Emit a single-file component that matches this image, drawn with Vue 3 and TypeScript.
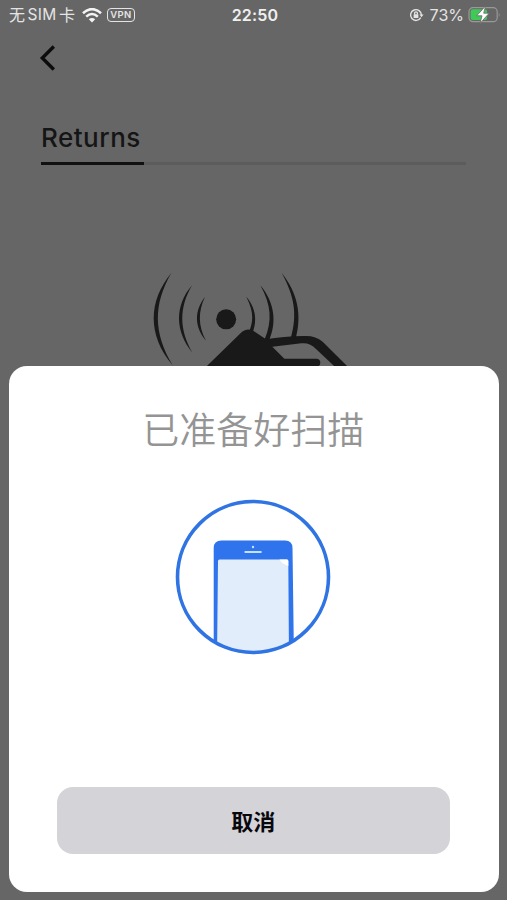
<script setup lang="ts">
import { ref } from 'vue'

const time = ref('22:50')
const battery = ref(73)
const scanning = ref(true)

function cancel(): void {
  scanning.value = false
}
</script>

<template>
  <main class="phone">
    <header class="status">
      <div class="status-left">
        <span class="carrier"><span>无</span><span class="sim">SIM</span><span>卡</span></span>
        <svg class="wifi" viewBox="0 0 20 15" aria-hidden="true">
          <path d="M1 5.3Q10-3 19 5.3" />
          <path d="M4.2 8.6Q10 3.4 15.8 8.6" />
          <path class="wifi-dot" d="M6.8 11.3Q10 8.6 13.2 11.3L10 14.6Z" />
        </svg>
        <span class="vpn">VPN</span>
      </div>
      <span class="clock">{{ time }}</span>
      <div class="status-right">
        <svg class="lock" viewBox="0 0 15 14" aria-hidden="true">
          <path class="ring" d="M11.7 9.7A5.4 5.4 0 1 1 12.4 7" />
          <path d="M10.500 6.500H14.600L12.500 9.200Z" />
          <rect x="4.600" y="6.200" width="4.800" height="3.800" rx=".6" />
          <path class="shackle" d="M5.600 6.500V5.300a1.400 1.400 0 0 1 2.800 0v1.200" />
        </svg>
        <span class="percent">{{ battery }}%</span>
        <svg class="battery" viewBox="0 0 34 20" aria-hidden="true">
          <rect class="case" x="2" y="2.700" width="28.200" height="14" rx="4" />
          <path class="nub" d="M31.800 7.400q1.600 2.400 0 4.800z" />
          <rect class="charge" x="3.600" y="4.300" width="16.500" height="10.800" rx="2.400" />
          <path class="bolt" d="M18.600 1L9.600 10.800h5.400L13 18.400L22.200 8.200h-5.500Z" />
        </svg>
      </div>
    </header>

    <nav class="back">
      <svg viewBox="0 0 18 28" aria-hidden="true"><path d="M14.800 2.500L3.300 14L14.800 25.500" /></svg>
    </nav>

    <div class="tabs"><span class="tab">Returns</span></div>

    <svg class="nfc" viewBox="0 0 660 375" aria-hidden="true">
      <path d="M94 39C25 122 21 225 98 316C40 220 39 133 94 39Z" />
      <path d="M156 76C103 137 105 215 157 278C117 207 117 144 156 76Z" />
      <path d="M195 110C162 153 163 200 198 242C174 197 174 155 195 110Z" />
      <path d="M319 110C345 141 353 177 338 218L328 214C342 176 339 151 319 110Z" />
      <path d="M361 76C404 128 411 186 387 242L374 238C397 182 394 136 361 76Z" />
      <path d="M425 39C474 100 486 166 467 236L453 232C472 163 464 110 425 39Z" />
      <circle cx="258.500" cy="178" r="30" />
      <path d="M200 319L300 221Q325 197 351 220L378 238Q430 229 492 228Q526 226 548 245L622 319H583L528 267Q510 247 484 250L397 260L433 296H531Q541 298 541 308Q541 316 535 319V345H200Z" />
    </svg>

    <section v-if="scanning" class="sheet">
      <h1 class="title">已准备好扫描</h1>
      <svg class="device" viewBox="0 0 156 156" aria-hidden="true">
        <defs>
          <clipPath id="device-clip"><circle cx="78" cy="78" r="76" /></clipPath>
        </defs>
        <g clip-path="url(#device-clip)">
          <path class="blue" d="M38.700 160V49Q38.700 41.500 46.500 41.500H110Q117.500 41.500 117.500 49L119 160Z" />
          <path class="screen" d="M43 62Q43 60.500 44.500 60.500H112Q113.300 60.500 113.300 62L114 160H42Z" />
          <path class="glare" d="M104.500 60.500H112Q113.300 60.500 113.300 62V67Q107 65 104.500 60.500Z" />
          <rect class="speaker" x="69.300" y="52" width="17.500" height="2" rx="1" />
          <circle class="speaker" cx="78" cy="48" r="1.200" />
        </g>
        <circle class="outline" cx="78" cy="78" r="75.500" />
      </svg>
      <button class="cancel" type="button" @click="cancel">取消</button>
    </section>
  </main>
</template>

<style>
body {
  margin: 0;
  background: #666;
}
</style>

<style scoped>
.phone {
  position: relative;
  display: flex;
  flex-direction: column;
  width: 507px;
  height: 900px;
  overflow: hidden;
  background: #666;
  font-family: Inter, "Noto Sans CJK SC", sans-serif;
}

svg {
  display: block;
}

.status {
  display: grid;
  grid-template-columns: 1fr auto 1fr;
  align-items: center;
  box-sizing: border-box;
  height: 30px;
  padding: 0 6px 0 9px;
  color: #e4e4e4;
  font-size: 16px;
  line-height: 20px;
}

.status-left,
.status-right,
.carrier {
  display: flex;
  align-items: center;
}

.carrier {
  gap: 2.500px;
  width: 66px;
}

.sim {
  font-size: 15.500px;
  letter-spacing: 0.3px;
}

.wifi {
  width: 20px;
  height: 15px;
  margin-left: 7px;
  fill: none;
  stroke: #f4f4f4;
  stroke-width: 2.6;
}

.wifi-dot {
  fill: #f4f4f4;
  stroke: none;
}

.vpn {
  box-sizing: border-box;
  width: 28px;
  height: 14px;
  margin-left: 5px;
  border: 1.4px solid #e4e4e4;
  border-radius: 4px;
  font-size: 9.500px;
  font-weight: 600;
  line-height: 12px;
  letter-spacing: 0.4px;
  text-align: center;
}

.clock {
  color: #f0f0f0;
  font-size: 16px;
  font-weight: 600;
  letter-spacing: 0.2px;
}

.status-right {
  justify-content: flex-end;
}

.lock {
  width: 15px;
  height: 14px;
  fill: #e4e4e4;
}

.ring,
.shackle {
  fill: none;
  stroke: #e4e4e4;
  stroke-width: 1.4;
}

.percent {
  margin-left: 6px;
}

.battery {
  width: 34px;
  height: 20px;
  margin-left: 3px;
}

.case {
  fill: none;
  stroke: #999;
  stroke-width: 1.2;
}

.nub {
  fill: #999;
}

.charge {
  fill: #3fca58;
}

.bolt {
  fill: #fff;
  stroke: #666;
  stroke-width: 0.8;
}

.back {
  padding: 14px 0 0 39px;
}

.back svg {
  width: 18px;
  height: 28px;
  fill: none;
  stroke: #0c0c0c;
  stroke-width: 3.4;
}

.tabs {
  display: flex;
  height: 42px;
  margin: 51px 41px 0;
  box-shadow: inset 0 -3px #5c5c5c;
}

.tab {
  box-sizing: border-box;
  width: 103px;
  border-bottom: 3px solid #111;
  color: #151515;
  font-size: 26px;
  font-weight: 500;
  line-height: 29px;
  letter-spacing: 0.5px;
}

.nfc {
  width: 220px;
  height: 125px;
  margin: 95px 0 0 140px;
  fill: #191919;
}

.sheet {
  position: absolute;
  top: 366px;
  right: 8.500px;
  bottom: 8.500px;
  left: 9px;
  display: flex;
  flex-direction: column;
  align-items: center;
  box-sizing: border-box;
  padding: 38px 49px 37.500px 48px;
  border-radius: 18px;
  background: #fff;
}

.title {
  margin: 0;
  color: #949494;
  font-size: 37px;
  font-weight: 350;
  line-height: 54px;
}

.device {
  width: 156px;
  height: 156px;
  margin-top: 40.500px;
}

.blue {
  fill: #2f74ed;
}

.screen {
  fill: #e1edfb;
}

.glare {
  fill: #fff;
}

.speaker {
  fill: #c2e2ff;
}

.outline {
  fill: none;
  stroke: #2f74e2;
  stroke-width: 3.6;
}

.cancel {
  width: 100%;
  height: 67.500px;
  margin: auto 0 0;
  padding: 0 0 1px;
  border: 0;
  border-radius: 16px;
  background: #d4d3d8;
  color: #08080c;
  font: 700 22px/66px "Noto Sans CJK SC", sans-serif;
}
</style>
